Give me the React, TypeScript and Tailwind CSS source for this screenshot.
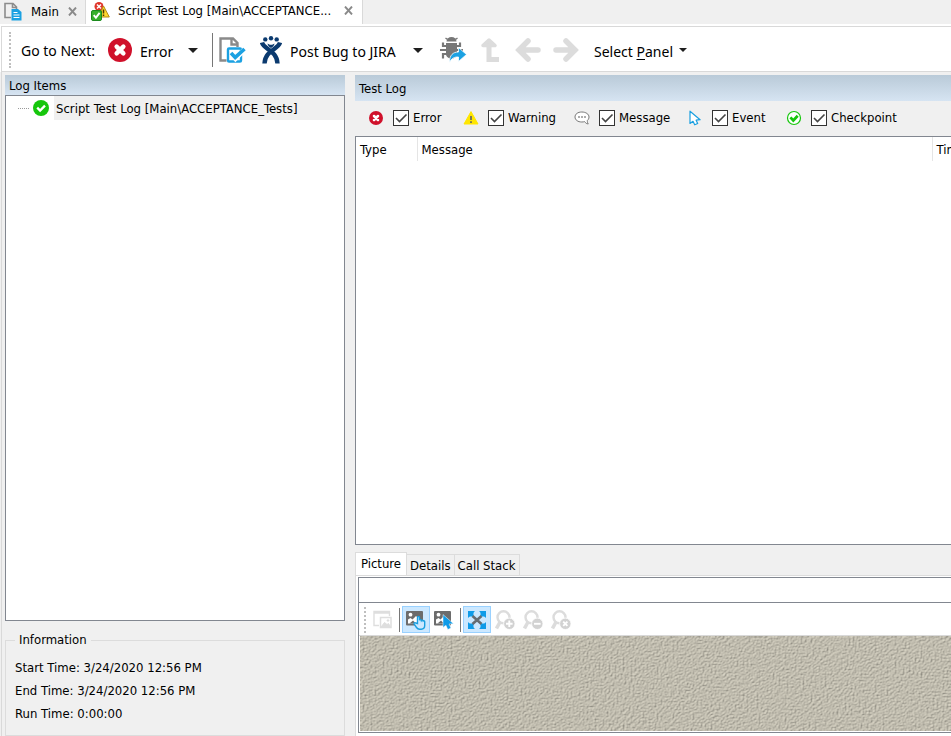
import { useState } from 'react';
import type { ReactNode } from 'react';

/* ---------- Icons ---------- */

const ErrorIcon = ({ size }: { size: number }) => (
  <svg width={size} height={size} viewBox="0 0 24 24">
    <circle cx="12" cy="12" r="12" fill="#d0112b" />
    <path d="M8.6 8.6l6.8 6.8M15.4 8.6l-6.8 6.8" stroke="#fff" strokeWidth="4.4" strokeLinecap="round" />
  </svg>
);

const PassedIcon = () => (
  <svg width="16" height="16" viewBox="0 0 16 16">
    <circle cx="8" cy="8" r="8" fill="#16c60c" />
    <path d="M4.2 7.6l2.9 3L12 5.6" stroke="#fff" strokeWidth="2.3" fill="none" />
  </svg>
);

const CheckpointIcon = () => (
  <svg width="16" height="16" viewBox="0 0 16 16">
    <circle cx="8" cy="8" r="6.5" fill="#fff" stroke="#16c60c" strokeWidth="1.2" />
    <path d="M4.4 7.4l2.9 3 4.4-4.6" stroke="#16c60c" strokeWidth="2.8" fill="none" />
  </svg>
);

const WarningIcon = () => (
  <svg width="16" height="16" viewBox="0 0 16 16">
    <path d="M8 1.6L15 14H1z" fill="#ffe600" stroke="#ffe600" strokeWidth="1" strokeLinejoin="round" />
    <path d="M8 6v4M8 11.2v1.8" stroke="#666" strokeWidth="1.7" />
  </svg>
);

const MessageIcon = () => (
  <svg width="16" height="16" viewBox="0 0 16 16" fill="none" stroke="#777">
    <path
      d="M7.8 2c-4 0-6.8 2.100-6.800 5s2.800 5 6.800 5c1 0 2-.1 2.800-.4.9 1.400 2.100 2.300 3.700 2.300-.8-.9-1.100-2.200-.9-3.500 1-.8 1.600-2 1.600-3.400 0-2.900-3.200-5-7.200-5z"
      fill="#fff"
    />
    <path d="M4.200 7h1.600M7.200 7h1.600M10.200 7h1.600" strokeWidth="1.600" />
  </svg>
);

const EventIcon = () => (
  <svg width="16" height="16" viewBox="0 0 16 16">
    <path
      d="M3 1.200v12.300l3-2.200 1.700 3.500 3-1.300-1.600-3.300 4-.5z"
      fill="#fff"
      stroke="#1a9fe0"
      strokeWidth="1.200"
      strokeLinejoin="round"
    />
  </svg>
);

const MainTabIcon = () => (
  <svg width="20" height="20" viewBox="0 0 20 20">
    <path d="M7 15.500H1V1.500h8l3.500 3.500V7M8.500 1.500V5.500h4" fill="none" stroke="#8c8c8c" strokeWidth="1.600" />
    <path d="M7.500 7H14l3.500 3v8.500h-10z" fill="#1ba1e2" />
    <path d="M9.500 10.500h4M9.500 13h6M9.500 15.500h6" stroke="#fff" />
  </svg>
);

const LogTabIcon = () => (
  <svg width="19" height="19" viewBox="0 0 19 19">
    <circle cx="8" cy="4.500" r="4.500" fill="#e0352b" />
    <path d="M6 2.500l4 4M10 2.500l-4 4" stroke="#fff" strokeWidth="1.500" />
    <path d="M12.500 4l5.800 11H7z" fill="#ffd82e" stroke="#b48a12" strokeLinejoin="round" />
    <path d="M12.500 7.500v4M12.500 12.500v1.500" stroke="#4a3500" strokeWidth="1.500" />
    <rect x="0.500" y="8.500" width="10" height="10" rx="1.500" fill="#36b02c" stroke="#1b8a1d" />
    <path d="M2.700 13.200l2.200 2.500 3.700-4.800" stroke="#fff" strokeWidth="1.900" fill="none" />
  </svg>
);

const CloseIcon = () => (
  <svg width="9" height="9" viewBox="0 0 9 9">
    <path d="M1 .5l7 8M8 .5l-7 8" stroke="#8a8a8a" strokeWidth="1.900" />
  </svg>
);

const CaretIcon = ({ size }: { size: number }) => (
  <svg width={size} height={size / 2} viewBox="0 0 10 5">
    <path d="M0 0h10L5 5z" fill="#1e1e1e" />
  </svg>
);

const CheckLogIcon = () => (
  <svg width="27" height="27" viewBox="0 0 27 27" fill="none">
    <path d="M7.500 23.500H1.500V1.500h12.500l4.500 4.500v4M12.500 2v5.500h6" stroke="#8a8a8a" strokeWidth="2.400" />
    <rect x="9" y="11.500" width="13" height="13" rx="1" fill="#fff" stroke="#1ba1e2" strokeWidth="2.400" />
    <path d="M12.500 17l4 4.500 9-9" stroke="#fff" strokeWidth="5" />
    <path d="M12 16l4.200 4.400 9.300-8.400" stroke="#1ba1e2" strokeWidth="3.600" />
  </svg>
);

const JiraIcon = () => (
  <svg width="22" height="28" viewBox="0 0 22 28">
    <g fill="#0b3a6f">
      <circle cx="5.300" cy="3.400" r="2.200" />
      <circle cx="11" cy="2.300" r="2.200" />
      <circle cx="16.700" cy="3.400" r="2.200" />
      <path d="M7.500 7.500c1.200 1 2.200 1.300 3.500 1.300s2.300-.3 3.500-1.300c-.3 2.200-1.700 3.700-3.500 4.500-1.800-.8-3.200-2.300-3.500-4.500z" />
    </g>
    <path d="M2 6.500c1.300 6.500 15 8 15.500 21" fill="none" stroke="#0b3a6f" strokeWidth="4.400" />
    <path d="M20 6.500c-1.300 6.500-15 8-15.500 21" fill="none" stroke="#0b3a6f" strokeWidth="4.400" />
  </svg>
);

const BugIcon = () => (
  <svg width="28" height="28" viewBox="0 0 28 28" fill="none">
    <path d="M7.500 5.500a5 4.500 0 0 1 10 0z" fill="#777" />
    <path d="M6.500 2l2 1.500M18.500 2l-2 1.500" stroke="#777" strokeWidth="1.400" />
    <path d="M7 7h11v12c-2 5-9 5-11 0z" fill="#777" />
    <path d="M7.500 10H4V6.500M1 14h6M7.500 18H4v4.500M17.500 10H21V6.500M18 14h6" stroke="#777" strokeWidth="2.200" />
    <path
      d="M10.500 26.500c0-7.500 3.500-10.500 9-10.500v-4.500l8 7-8 7V21c-4.500-.2-7 1.500-9 5.500z"
      fill="#1ba1e2"
      stroke="#fff"
      strokeWidth=".8"
    />
  </svg>
);

const UpIcon = () => (
  <svg width="20" height="26" viewBox="0 0 20 26">
    <path d="M9 4v18.500h10" fill="none" stroke="#dcdcdc" strokeWidth="5" />
    <path d="M3 8.500L9 3l6 5.500z" fill="#dcdcdc" stroke="#dcdcdc" strokeWidth="3.500" strokeLinejoin="round" />
  </svg>
);

const ArrowIcon = ({ flip }: { flip?: boolean }) => (
  <svg width="26" height="24" viewBox="0 0 26 24" className={flip ? 'rotate-180' : ''}>
    <path
      d="M4 12h19M13 3L4 12l9 9"
      fill="none"
      stroke="#dcdcdc"
      strokeWidth="5.500"
      strokeLinecap="round"
    />
  </svg>
);

const WindowPictureIcon = () => (
  <svg width="20" height="20" viewBox="0 0 20 20" fill="none" stroke="#dedede">
    <path d="M6 15.500H1V1.500h15.500V6" strokeWidth="1.400" />
    <path d="M1 2.500h16" strokeWidth="2.500" />
    <path d="M7.500 7.500h10.500v10H7.500z" strokeWidth="1.500" />
    <path d="M8 17l3.500-4.500 2.500 2 1.500-1 2 3.500z" fill="#dedede" />
    <circle cx="15" cy="10.500" r=".8" fill="#dedede" />
  </svg>
);

const PictureBase = () => (
  <>
    <rect x="0" y="1" width="17" height="14.500" rx="1" fill="#6c6c6c" />
    <path d="M2 13.500V9.500l2.500-1.500 2 1.500L10 6l2 2v5.500z" fill="#fff" />
    <path d="M3.500 13.500l3.500-3 3 3z" fill="#6c6c6c" />
    <circle cx="4.500" cy="4.700" r="1.900" fill="#fff" />
  </>
);

const PictureHandIcon = () => (
  <svg width="20" height="20" viewBox="0 0 20 20">
    <PictureBase />
    <path
      d="M11.500 13.500V7.500c0-1.500 2-1.500 2 0v2.800c.4-.9 1.800-.7 1.900.2.500-.7 1.700-.4 1.800.5.600-.5 1.500-.1 1.500.7v3.800c0 2-1.300 3.700-3.500 3.700h-1.700c-1.500 0-2.300-.7-3-1.700l-2.300-3.300c-.7-1.200.7-2 1.600-1.200z"
      fill="#cce8ff"
      stroke="#1a9fe0"
      strokeWidth="1.400"
    />
  </svg>
);

const PictureCursorIcon = () => (
  <svg width="20" height="20" viewBox="0 0 20 20">
    <PictureBase />
    <path d="M9 4.500v13l2.900-2.300 1.900 4.300 3.200-1.400-1.900-4.100 4.400-.3z" fill="#0f9be8" stroke="#fff" strokeWidth=".5" />
  </svg>
);

const FitIcon = () => (
  <svg width="18" height="18" viewBox="0 0 18 18">
    <path d="M0 0h7L0 7zM18 0h-7l7 7zM0 18h7l-7-7zM18 18h-7l7-7z" fill="#0f9be8" />
    <path d="M1 1h4.500v4.500H1zM12.500 1H17v4.500h-4.500zM1 12.500h4.500V17H1zM12.500 12.500H17V17h-4.500z" fill="#0f9be8" />
    <path d="M4.500 5l9 8M13.500 5l-9 8" stroke="#666c72" strokeWidth="2.600" />
  </svg>
);

const ZoomIcon = ({ mark }: { mark: string }) => (
  <svg width="20" height="20" viewBox="0 0 20 20" fill="none">
    <circle cx="8.500" cy="7.300" r="6" stroke="#dcdcdc" strokeWidth="2.400" />
    <path d="M5 12L1.500 18.500" stroke="#dcdcdc" strokeWidth="3.500" />
    <circle cx="14.300" cy="13.800" r="5.700" fill="#d2d2d2" stroke="#fff" strokeWidth=".8" />
    <path d={mark} stroke="#fff" strokeWidth="1.900" />
  </svg>
);

/* Embossed sand texture behind the picture viewer */
const Texture = () => (
  <svg className="block w-full h-full" preserveAspectRatio="none">
    <filter id="sand" x="0" y="0" width="100%" height="100%" colorInterpolationFilters="sRGB">
      <feTurbulence type="fractalNoise" baseFrequency="0.5 0.62" numOctaves="2" seed="11" />
      <feColorMatrix values="0 0 0 0 0  0 0 0 0 0  0 0 0 0 0  1 0 0 0 0" />
      <feDiffuseLighting surfaceScale="0.8" diffuseConstant="1.13" lightingColor="#c4c0b2">
        <feDistantLight azimuth="225" elevation="60" />
      </feDiffuseLighting>
    </filter>
    <rect width="100%" height="100%" fill="#bfbbab" />
    <rect width="100%" height="100%" filter="url(#sand)" />
  </svg>
);

/* ---------- Pieces ---------- */

const filters = [
  { name: 'Error', icon: <ErrorIcon size={14} /> },
  { name: 'Warning', icon: <WarningIcon /> },
  { name: 'Message', icon: <MessageIcon /> },
  { name: 'Event', icon: <EventIcon /> },
  { name: 'Checkpoint', icon: <CheckpointIcon /> },
];

const info = [
  { label: 'Start Time', value: '3/24/2020 12:56 PM' },
  { label: 'End Time', value: '3/24/2020 12:56 PM' },
  { label: 'Run Time', value: '0:00:00' },
];

const panelTabs = ['Picture', 'Details', 'Call Stack'];

const Filter = ({ name, icon }: { name: string; icon: ReactNode }) => (
  <div className="flex items-center">
    <span className="flex w-4 justify-center">{icon}</span>
    <span className="relative ml-[9px] h-4 w-4">
      <input
        id={`filter-${name}`}
        type="checkbox"
        defaultChecked
        className="peer block h-4 w-4 appearance-none border border-[#333] bg-white"
      />
      <svg className="pointer-events-none absolute inset-0 hidden peer-checked:block" width="16" height="16" viewBox="0 0 16 16">
        <path d="M3 8l3.500 3.500L13.500 4.500" fill="none" stroke="#444" strokeWidth="1.600" />
      </svg>
    </span>
    <label htmlFor={`filter-${name}`} className="ml-1">{name}</label>
  </div>
);

const Toolbar = () => (
  <div className="ml-px flex h-[46px] items-center border-y border-l border-[#d9d9d9] bg-white pl-[7px] pt-[2px] font-['Noto_Sans','Open_Sans',sans-serif] text-sm">
    <div className="h-9 border-l-2 border-dotted border-[#bfbfbf]" />
    <span className="ml-[10px] w-[87px] whitespace-nowrap pt-[2px]">Go to Next:</span>
    <button className="flex w-[73px] items-center gap-2">
      <ErrorIcon size={24} />
      <span className="pt-[3px]">Error</span>
    </button>
    <button aria-label="Error options" className="flex w-6 justify-center">
      <CaretIcon size={10} />
    </button>
    <div className="ml-[7px] h-[34px] border-l border-[#777]" />
    <button aria-label="Check log" className="ml-[6px]">
      <CheckLogIcon />
    </button>
    <button className="ml-[14px] flex w-[146px] items-center gap-2 whitespace-nowrap">
      <JiraIcon />
      <span className="pt-[3px]">Post Bug to JIRA</span>
    </button>
    <button aria-label="Post options" className="flex w-6 justify-center">
      <CaretIcon size={10} />
    </button>
    <button aria-label="Send bug" className="ml-[9px]">
      <BugIcon />
    </button>
    <button aria-label="Up" className="ml-[13px]">
      <UpIcon />
    </button>
    <button aria-label="Back" className="ml-[15px]">
      <ArrowIcon />
    </button>
    <button aria-label="Forward" className="ml-3">
      <ArrowIcon flip />
    </button>
    <button className="ml-[15px] flex items-center gap-[6px] whitespace-nowrap">
      <span className="pt-[3px]">Select <u className="underline-offset-2">P</u>anel</span>
      <CaretIcon size={8} />
    </button>
  </div>
);

const PictureToolbar = () => (
  <div className="flex h-[33px] items-center border-b border-[#d9d9d9] bg-white pl-[5px] pt-px">
    <div className="h-[26px] border-l-2 border-dotted border-[#bfbfbf]" />
    <button aria-label="Open picture" className="ml-[7px] w-5">
      <WindowPictureIcon />
    </button>
    <div className="ml-[6px] h-6 border-l border-[#777]" />
    <button aria-label="Pan" className="ml-[2px] flex h-[27px] w-7 items-center justify-center border border-[#99d1ff] bg-[#cce8ff]">
      <PictureHandIcon />
    </button>
    <button aria-label="Select" className="flex h-[27px] w-7 items-center justify-center">
      <PictureCursorIcon />
    </button>
    <div className="ml-[2px] h-6 border-l border-[#777]" />
    <button aria-label="Fit to window" className="ml-[2px] flex h-[27px] w-7 items-center justify-center border border-[#99d1ff] bg-[#cce8ff]">
      <FitIcon />
    </button>
    <button aria-label="Zoom in" className="flex w-7 justify-center">
      <ZoomIcon mark="M11 13.800h6.600M14.300 10.500v6.600" />
    </button>
    <button aria-label="Zoom out" className="flex w-7 justify-center">
      <ZoomIcon mark="M11 13.800h6.600" />
    </button>
    <button aria-label="Reset zoom" className="flex w-7 justify-center">
      <ZoomIcon mark="M12.200 11.700l4.200 4.200M16.400 11.700l-4.200 4.200" />
    </button>
  </div>
);

const App = () => {
  const [activeTab, setActiveTab] = useState('Picture');

  return (
    <div className="flex min-h-screen flex-col overflow-hidden bg-[#f0f0f0] font-['DejaVu_Sans_Condensed','DejaVu_Sans',sans-serif] text-[13px] leading-4 text-black">
      {/* Document tabs */}
      <div className="flex h-6">
        <div className="flex w-[86px] items-center border-r border-[#d9d9d9] pl-1">
          <MainTabIcon />
          <a href="#main" className="ml-[7px] w-[37px]">Main</a>
          <button aria-label="Close Main" className="pb-[2px]"><CloseIcon /></button>
        </div>
        <div className="flex w-[277px] items-center border-r border-[#d9d9d9] bg-white pb-[2px] pl-[5px]">
          <LogTabIcon />
          <a href="#log" className="ml-2 w-[226px] whitespace-nowrap">Script Test Log [Main\ACCEPTANCE...</a>
          <button aria-label="Close Script Test Log" className="pb-[2px]"><CloseIcon /></button>
        </div>
      </div>

      <div className="bg-white pt-[2px]">
        <Toolbar />
      </div>

      <div className="ml-px flex flex-1 border-l border-[#d9d9d9] pl-[3px] pt-[3px]">
        {/* Log tree */}
        <aside className="flex w-[340px] shrink-0 flex-col">
          <h2 className="h-5 bg-linear-to-b from-[#b9cad8] to-[#d6e4f2] pl-1 leading-[22px]">Log Items</h2>
          <div className="flex-1 border border-[#828790] bg-white">
            <div className="flex h-6 items-center pl-3">
              <span className="w-[11px] border-t border-dotted border-[#999]" />
              <span className="ml-1"><PassedIcon /></span>
              <span className="ml-[5px] flex h-6 flex-1 items-center bg-[#f0f0f0] pl-[2px] pt-[2px]">Script Test Log [Main\ACCEPTANCE_Tests]</span>
            </div>
          </div>
          <fieldset className="mt-[10px] h-[105px] border border-[#dcdcdc] pl-[9px]">
            <legend className="px-1 leading-[18px]">Information</legend>
            <div className="flex flex-col gap-[7px] pt-[11px]">
              {info.map((row) => (
                <p key={row.label}>{row.label}: {row.value}</p>
              ))}
            </div>
          </fieldset>
        </aside>

        {/* Test log */}
        <main className="ml-[10px] flex min-w-0 flex-1 flex-col">
          <h2 className="h-[26px] bg-linear-to-b from-[#b9cad8] to-[#d6e4f2] pl-1 leading-7">Test Log</h2>
          <div className="grid h-[35px] grid-cols-[95px_111px_113px_99px_auto] pb-px pl-[13px]">
            {filters.map((f) => (
              <Filter key={f.name} name={f.name} icon={f.icon} />
            ))}
          </div>
          <div className="flex-1 overflow-hidden border border-r-0 border-[#828790] bg-white">
            <table className="w-[697px] table-fixed border-collapse text-left">
              <thead>
                <tr className="h-6">
                  <th className="w-[61px] border-r border-[#e5e5e5] pl-1 pt-[2px] font-normal">Type</th>
                  <th className="w-[515px] border-r border-[#e5e5e5] pl-1 pt-[2px] font-normal">Message</th>
                  <th className="pl-1 pt-[2px] font-normal">Time</th>
                </tr>
              </thead>
              <tbody />
            </table>
          </div>

          {/* Details pane */}
          <div className="mt-[7px] flex h-[23px] items-end">
            {panelTabs.map((tab) => (
              <button
                key={tab}
                onClick={() => setActiveTab(tab)}
                className={
                  activeTab === tab
                    ? 'h-[23px] w-[52px] whitespace-nowrap border-x border-t border-[#dcdcdc] bg-white'
                    : 'h-[21px] whitespace-nowrap border-r border-t border-[#dcdcdc] px-[3px] pt-px'
                }
              >
                {tab}
              </button>
            ))}
          </div>
          <div className="h-[161px] border-l border-t border-[#dcdcdc] bg-white pb-[3px] pl-[2px] pt-px">
            <div className="flex h-full flex-col border border-r-0 border-[#828790]">
              <div className="h-[25px] border-b border-[#828790]" />
              <PictureToolbar />
              <div className="min-h-0 flex-1 pb-px pl-px">
                <Texture />
              </div>
            </div>
          </div>
        </main>
      </div>
    </div>
  );
};

export default App;
